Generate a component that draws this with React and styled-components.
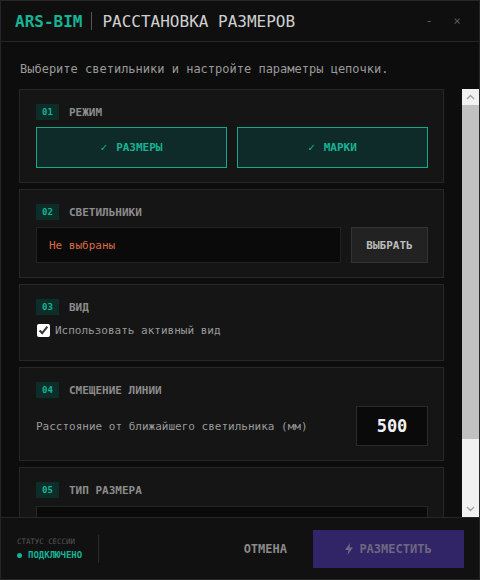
import React from "react";
import styled, { createGlobalStyle } from "styled-components";

const Global = createGlobalStyle`
  html, body { margin: 0; padding: 0; background: #0e0e0e; }
  body { font-family: "DejaVu Sans Mono", "Liberation Mono", monospace; }
  * { box-sizing: border-box; }
`;

const Window = styled.div`
  width: 480px;
  height: 580px;
  display: flex;
  flex-direction: column;
  background: #0d0d0d;
  border: 1px solid #262626;
`;

const Header = styled.header`
  height: 41px;
  flex: none;
  display: flex;
  align-items: center;
  padding: 0 8px 0 14px;
  border-bottom: 1px solid #262626;
  background: #0f0f0f;
`;

const Brand = styled.span`
  color: #17b394;
  font-weight: bold;
  font-size: 16px;
`;

const Divider = styled.span`
  width: 1px;
  height: 18px;
  background: #555;
  margin: 0 10px 0 9px;
`;

const Title = styled.span`
  color: #cfcfcf;
  font-size: 16px;
  flex: 1;
`;

const WinCtrl = styled.span`
  color: #5a5a5a;
  font-size: 12px;
  width: 28px;
  text-align: center;
`;

const Intro = styled.p`
  margin: 0;
  flex: none;
  padding: 19px 19px 12px;
  font-size: 12px;
  line-height: 16px;
  color: #9a9a9a;
`;

const Body = styled.div`
  flex: 1;
  min-height: 0;
  display: flex;
`;

const Scroll = styled.div`
  flex: 1;
  min-width: 0;
  overflow: hidden;
  padding: 0 18px 38px 18px;
  display: flex;
  flex-direction: column;
  gap: 6px;
`;

const Rail = styled.div`
  width: 17px;
  flex: none;
  background: #f1f1f1;
  display: flex;
  flex-direction: column;
`;

const RailArrow = styled.div`
  height: 16px;
  flex: none;
  display: flex;
  align-items: center;
  justify-content: center;
`;

const RailTrack = styled.div`
  flex: 1;
  display: flex;
  flex-direction: column;
`;

const Thumb = styled.div`
  height: 334px;
  background: #c1c1c1;
`;

const Chevron = ({ down }) => (
  <svg width="9" height="6" viewBox="0 0 9 6">
    <path
      d={down ? "M1 1 L4.5 4.5 L8 1" : "M1 5 L4.5 1.5 L8 5"}
      fill="none"
      stroke="#a3a3a3"
      strokeWidth="1.4"
    />
  </svg>
);

const Card = styled.section`
  flex: none;
  background: #151515;
  border: 1px solid #272727;
  padding: 14px 15px 14px 16px;
  display: flex;
  flex-direction: column;
  gap: ${(p) => p.$gap || 7}px;
`;

const CardHead = styled.div`
  display: flex;
  align-items: center;
  gap: 10px;
  height: 16px;
`;

const Badge = styled.span`
  width: 23px;
  height: 16px;
  display: flex;
  align-items: center;
  justify-content: center;
  background: #0d2d29;
  color: #17b394;
  font-size: 9px;
  font-weight: bold;
`;

const CardLabel = styled.span`
  color: #8c8c8c;
  font-size: 11px;
  font-weight: bold;
`;

const ModeRow = styled.div`
  display: grid;
  grid-template-columns: 1fr 1fr;
  gap: 10px;
`;

const ModeButton = styled.button`
  height: 41px;
  background: #0e2b29;
  border: 1px solid #14a88b;
  color: #17b394;
  font-family: inherit;
  font-size: 11px;
  font-weight: bold;
  display: flex;
  align-items: center;
  justify-content: center;
  gap: 9px;
  padding: 0;
`;

const PickRow = styled.div`
  display: flex;
  gap: 10px;
`;

const Field = styled.div`
  flex: 1;
  height: 36px;
  background: #0a0a0a;
  border: 1px solid #222;
  display: flex;
  align-items: center;
  padding: 0 12px;
  font-size: 11px;
  color: ${(p) => p.$color || "#ccc"};
`;

const GrayButton = styled.button`
  width: 77px;
  height: 36px;
  background: #222;
  border: 1px solid #333;
  color: #bdbdbd;
  font-family: inherit;
  font-size: 11px;
  font-weight: bold;
  padding: 0;
`;

const CheckRow = styled.label`
  display: flex;
  align-items: center;
  gap: 5px;
  height: 14px;
  margin-bottom: 9px;
  color: #9a9a9a;
  font-size: 11px;
`;

const Check = styled.input`
  width: 13px;
  height: 13px;
  margin: 0 0 0 1px;
  accent-color: #ffffff;
`;

const OffsetRow = styled.div`
  display: flex;
  align-items: center;
  justify-content: space-between;
`;

const OffsetText = styled.span`
  color: #9a9a9a;
  font-size: 11px;
`;

const NumBox = styled.div`
  width: 72px;
  height: 40px;
  background: #0a0a0a;
  border: 1px solid #2a2a2a;
  display: flex;
  align-items: center;
  justify-content: center;
  color: #f2f2f2;
  font-family: "DejaVu Sans Mono", monospace;
  font-weight: bold;
  font-size: 17px;
`;

const SelectBox = styled.div`
  height: 40px;
  background: #0a0a0a;
  border: 1px solid #262626;
  margin-top: 1px;
`;

const Footer = styled.footer`
  flex: none;
  height: 62px;
  border-top: 1px solid #262626;
  background: #111111;
  display: flex;
  align-items: center;
  padding: 0 15px 0 16px;
`;

const Status = styled.div`
  display: flex;
  flex-direction: column;
  gap: 4px;
  padding-right: 16px;
  border-right: 1px solid #2a2a2a;
  height: 28px;
  justify-content: center;
`;

const StatusCap = styled.span`
  color: #555;
  font-size: 7.4px;
`;

const StatusVal = styled.span`
  display: flex;
  align-items: center;
  gap: 6px;
  color: #17b394;
  font-size: 9px;
  font-weight: bold;
`;

const Dot = styled.span`
  width: 5px;
  height: 5px;
  border-radius: 50%;
  background: #17b394;
`;

const Spacer = styled.div`
  flex: 1;
`;

const Cancel = styled.button`
  background: none;
  border: none;
  color: #8a8a8a;
  font-family: inherit;
  font-size: 12px;
  font-weight: bold;
  padding: 0 14px;
  height: 38px;
  margin-right: 12px;
`;

const Primary = styled.button`
  width: 151px;
  height: 38px;
  background: #312568;
  border: none;
  color: #6d6880;
  font-family: inherit;
  font-size: 12px;
  font-weight: bold;
  display: flex;
  align-items: center;
  justify-content: center;
  gap: 6px;
  padding: 0;
`;

const Bolt = () => (
  <svg width="8" height="12" viewBox="0 0 8 12">
    <path d="M5 0 L0 7 L3.5 7 L2.5 12 L8 4.5 L4.5 4.5 Z" fill="#6d6880" />
  </svg>
);

export default function App() {
  return (
    <>
      <Global />
      <Window>
        <Header>
          <Brand>ARS-BIM</Brand>
          <Divider />
          <Title>РАССТАНОВКА РАЗМЕРОВ</Title>
          <WinCtrl>-</WinCtrl>
          <WinCtrl>×</WinCtrl>
        </Header>
        <Intro>Выберите светильники и настройте параметры цепочки.</Intro>
        <Body>
          <Scroll>
            <Card>
              <CardHead>
                <Badge>01</Badge>
                <CardLabel>РЕЖИМ</CardLabel>
              </CardHead>
              <ModeRow>
                <ModeButton>
                  <span>✓</span>
                  <span>РАЗМЕРЫ</span>
                </ModeButton>
                <ModeButton>
                  <span>✓</span>
                  <span>МАРКИ</span>
                </ModeButton>
              </ModeRow>
            </Card>
            <Card>
              <CardHead>
                <Badge>02</Badge>
                <CardLabel>СВЕТИЛЬНИКИ</CardLabel>
              </CardHead>
              <PickRow>
                <Field $color="#dd6a40">Не выбраны</Field>
                <GrayButton>ВЫБРАТЬ</GrayButton>
              </PickRow>
            </Card>
            <Card $gap={8}>
              <CardHead>
                <Badge>03</Badge>
                <CardLabel>ВИД</CardLabel>
              </CardHead>
              <CheckRow>
                <Check type="checkbox" defaultChecked />
                Использовать активный вид
              </CheckRow>
            </Card>
            <Card $gap={8}>
              <CardHead>
                <Badge>04</Badge>
                <CardLabel>СМЕЩЕНИЕ ЛИНИИ</CardLabel>
              </CardHead>
              <OffsetRow>
                <OffsetText>Расстояние от ближайшего светильника (мм)</OffsetText>
                <NumBox>500</NumBox>
              </OffsetRow>
            </Card>
            <Card $gap={7}>
              <CardHead>
                <Badge>05</Badge>
                <CardLabel>ТИП РАЗМЕРА</CardLabel>
              </CardHead>
              <SelectBox />
            </Card>
          </Scroll>
          <Rail aria-hidden="true">
            <RailArrow>
              <Chevron />
            </RailArrow>
            <RailTrack>
              <Thumb />
            </RailTrack>
            <RailArrow>
              <Chevron down />
            </RailArrow>
          </Rail>
        </Body>
        <Footer>
          <Status>
            <StatusCap>СТАТУС СЕССИИ</StatusCap>
            <StatusVal>
              <Dot />
              ПОДКЛЮЧЕНО
            </StatusVal>
          </Status>
          <Spacer />
          <Cancel>ОТМЕНА</Cancel>
          <Primary>
            <Bolt />
            РАЗМЕСТИТЬ
          </Primary>
        </Footer>
      </Window>
    </>
  );
}
